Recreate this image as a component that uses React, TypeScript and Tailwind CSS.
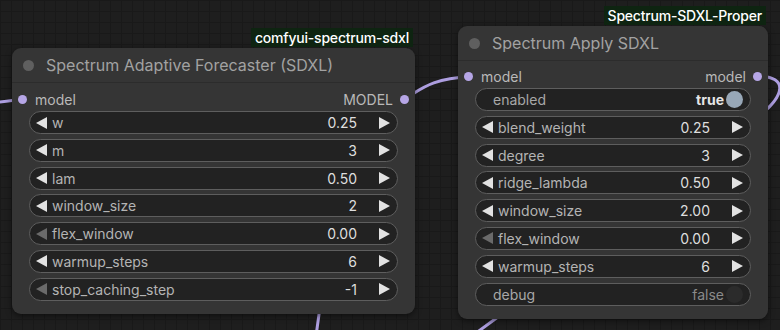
import type { ReactNode } from 'react';

type Widget =
  | { kind: 'num'; label: string; value: string; atMin?: boolean }
  | { kind: 'toggle'; label: string; on: boolean };

const FORECASTER: Widget[] = [
  { kind: 'num', label: 'w', value: '0.25' },
  { kind: 'num', label: 'm', value: '3' },
  { kind: 'num', label: 'lam', value: '0.50' },
  { kind: 'num', label: 'window_size', value: '2' },
  { kind: 'num', label: 'flex_window', value: '0.00', atMin: true },
  { kind: 'num', label: 'warmup_steps', value: '6' },
  { kind: 'num', label: 'stop_caching_step', value: '-1', atMin: true },
];

const APPLY: Widget[] = [
  { kind: 'toggle', label: 'enabled', on: true },
  { kind: 'num', label: 'blend_weight', value: '0.25' },
  { kind: 'num', label: 'degree', value: '3' },
  { kind: 'num', label: 'ridge_lambda', value: '0.50' },
  { kind: 'num', label: 'window_size', value: '2.00' },
  { kind: 'num', label: 'flex_window', value: '0.00', atMin: true },
  { kind: 'num', label: 'warmup_steps', value: '6' },
  { kind: 'toggle', label: 'debug', on: false },
];

function Arrow({ dir, dim }: { dir: 'left' | 'right'; dim?: boolean }) {
  return (
    <svg width="11" height="12" viewBox="0 0 11 12" className="shrink-0">
      <polygon
        points={dir === 'left' ? '11,0 11,12 0,6' : '0,0 0,12 11,6'}
        fill={dim ? '#6a6a6a' : '#e2e2e2'}
      />
    </svg>
  );
}

function WidgetRow({ w }: { w: Widget }) {
  if (w.kind === 'toggle') {
    return (
      <div className="h-[23px] mx-[17px] rounded-full border border-[#5e5e5e] bg-[#222222] flex items-center pl-[17px] pr-[7px]">
        <span className="flex-1 text-[#a8a8a8]">{w.label}</span>
        <span className={w.on ? 'font-bold text-[#e6e6e6]' : 'text-[#8a8a8a]'}>{w.on ? 'true' : 'false'}</span>
        <span className={`ml-[2px] w-[17px] h-[17px] rounded-full ${w.on ? 'bg-[#97a7b7]' : 'bg-[#2b2b2b]'}`} />
      </div>
    );
  }
  return (
    <div className="h-[23px] mx-[17px] rounded-full border border-[#5e5e5e] bg-[#222222] flex items-center pl-[6px] pr-[7px]">
      <Arrow dir="left" dim={w.atMin} />
      <span className="flex-1 ml-[5px] text-[#b4b4b4]">{w.label}</span>
      <span className="text-[#dedede]">{w.value}</span>
      <span className="w-[22px]" />
      <Arrow dir="right" />
    </div>
  );
}

function Node({
  box,
  badge,
  title,
  output,
  bodyPad,
  widgets,
}: {
  box: string;
  badge: string;
  title: string;
  output: string;
  bodyPad: string;
  widgets: Widget[];
}) {
  return (
    <div className={`absolute ${box} rounded-[9px] bg-[#353535] shadow-[0_2px_6px_rgba(0,0,0,0.5)]`}>
      <div className="absolute bottom-full right-[2px] mb-[1px] h-[19px] px-[4px] bg-[#0e2411] text-white text-[14px] font-medium leading-[19px] tracking-[-0.2px]">
        {badge}
      </div>
      <div className="h-[35px] border-b border-[#2c2c2c] flex items-center pl-[11px]">
        <span className="w-[11px] h-[11px] rounded-full bg-[#5f5f5f]" />
        <span className="ml-[12px] text-[16px] text-[#a2a2a2]">{title}</span>
      </div>
      <div className={bodyPad}>
        <div className="h-[22px] flex items-center px-[6px]">
          <span className="w-[9px] h-[9px] rounded-full bg-[#b6a6e6]" />
          <span className="ml-[8px] flex-1 text-[#b9b9b9]">model</span>
          <span className="mr-[7px] text-[#b9b9b9]">{output}</span>
          <span className="w-[9px] h-[9px] rounded-full bg-[#b6a6e6]" />
        </div>
        <div className="flex flex-col gap-[4.8px] mt-[1px]">
          {widgets.map((w) => (
            <WidgetRow key={w.label} w={w} />
          ))}
        </div>
      </div>
    </div>
  );
}

function Canvas({ children }: { children: ReactNode }) {
  return (
    <div className="relative w-[780px] h-[330px] overflow-hidden bg-[#1e1e1e] bg-[linear-gradient(#191919_1px,transparent_1px),linear-gradient(90deg,#191919_1px,transparent_1px)] bg-[size:11px_11px]">
      {children}
    </div>
  );
}

export default function App() {
  return (
    <div className="font-['Inter','Liberation_Sans',sans-serif] text-[14px]">
      <Canvas>
        <svg width="780" height="330" className="absolute inset-0">
          <g fill="none" stroke="#ad9ee0" strokeWidth="3" strokeLinecap="round">
            <path d="M -40 108 C -12 106, 0 100, 22 100" />
            <path d="M 404 99 C 418 92, 430 78, 469 77" />
            <path d="M 758 76 C 790 77, 782 96, 764 112" />
            <path d="M 321 300 L 316 336" />
            <path d="M 502 314 L 472 336" />
          </g>
        </svg>
        <Node
          box="left-[12px] top-[48px] w-[403px] h-[266px]"
          badge="comfyui-spectrum-sdxl"
          title="Spectrum Adaptive Forecaster (SDXL)"
          output="MODEL"
          bodyPad="pt-[5px]"
          widgets={FORECASTER}
        />
        <Node
          box="left-[458px] top-[26px] w-[310px] h-[293px]"
          badge="Spectrum-SDXL-Proper"
          title="Spectrum Apply SDXL"
          output="model"
          bodyPad="pt-[4px]"
          widgets={APPLY}
        />
      </Canvas>
    </div>
  );
}
